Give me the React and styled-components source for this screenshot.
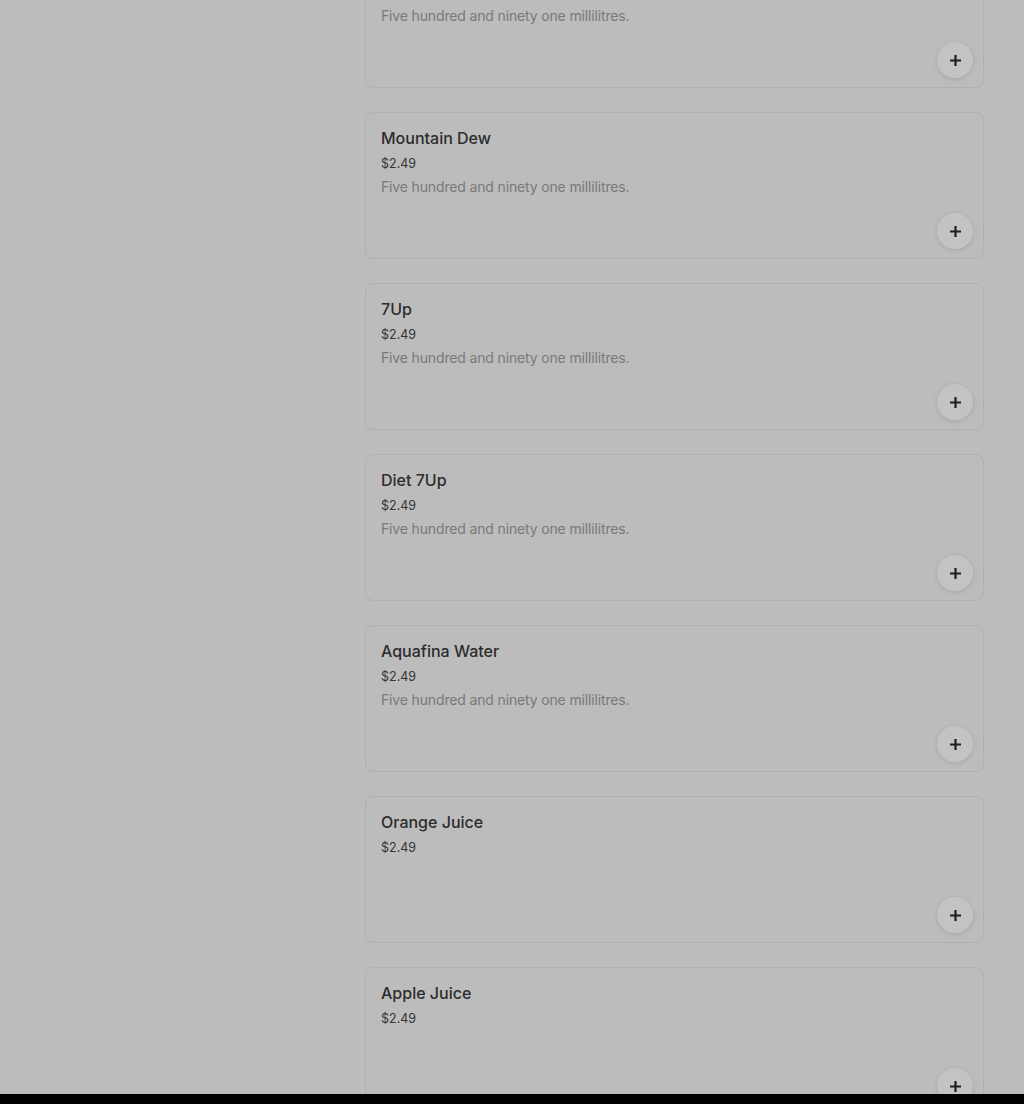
import React from 'react';
import styled, { createGlobalStyle } from 'styled-components';

const GlobalStyle = createGlobalStyle`
  html, body {
    margin: 0;
    padding: 0;
    background: #bcbcbc;
  }
  body {
    font-family: Inter, "Noto Sans", "Liberation Sans", sans-serif;
  }
`;

const Page = styled.div`
  height: 1104px;
  display: flex;
  flex-direction: column;
  overflow: hidden;
  background: #bcbcbc;
`;

const Scroller = styled.div`
  flex: 1;
  overflow: hidden;
  padding-left: 365px;
  padding-right: 40px;
`;

const List = styled.div`
  display: flex;
  flex-direction: column;
  gap: 24px;
  margin-top: -59px;
`;

const Card = styled.article`
  box-sizing: border-box;
  height: 147px;
  border: 1px solid #b0b0b0;
  border-radius: 8px;
  padding: 15px 15px 9px;
  display: flex;
  flex-direction: column;
`;

const Title = styled.div`
  font-size: 16px;
  line-height: 20px;
  font-weight: 500;
  color: #2c2c2c;
`;

const Price = styled.div`
  margin-top: 6px;
  font-size: 12.5px;
  line-height: 20px;
  color: #363636;
`;

const Desc = styled.div`
  margin-top: 3px;
  font-size: 14px;
  line-height: 20px;
  letter-spacing: -0.15px;
  color: #797979;
`;

const Footer = styled.div`
  margin-top: auto;
  margin-right: -5px;
  display: flex;
  justify-content: flex-end;
`;

const AddButton = styled.button`
  width: 36px;
  height: 36px;
  border-radius: 50%;
  border: none;
  padding: 0;
  background: #c3c3c3;
  box-shadow: 0 1px 5px rgba(0, 0, 0, 0.12);
  display: flex;
  align-items: center;
  justify-content: center;
  color: #1f1f1f;
  cursor: pointer;
`;

const BottomBar = styled.div`
  height: 10px;
  background: #000;
  flex-shrink: 0;
`;

const DESC = 'Five hundred and ninety one millilitres.';

const items = [
  { name: 'Pepsi', price: '$2.49', desc: DESC },
  { name: 'Mountain Dew', price: '$2.49', desc: DESC },
  { name: '7Up', price: '$2.49', desc: DESC },
  { name: 'Diet 7Up', price: '$2.49', desc: DESC },
  { name: 'Aquafina Water', price: '$2.49', desc: DESC },
  { name: 'Orange Juice', price: '$2.49' },
  { name: 'Apple Juice', price: '$2.49' },
];

const Plus = () => (
  <svg width="13" height="13" viewBox="0 0 13 13" aria-hidden="true">
    <path d="M6.5 1v11M1 6.5h11" stroke="currentColor" strokeWidth="2.2" />
  </svg>
);

const App = () => (
  <Page>
    <GlobalStyle />
    <Scroller>
      <List>
        {items.map((item) => (
          <Card key={item.name}>
            <Title>{item.name}</Title>
            <Price>{item.price}</Price>
            {item.desc && <Desc>{item.desc}</Desc>}
            <Footer>
              <AddButton aria-label={`Add ${item.name}`}>
                <Plus />
              </AddButton>
            </Footer>
          </Card>
        ))}
      </List>
    </Scroller>
    <BottomBar />
  </Page>
);

export default App;
